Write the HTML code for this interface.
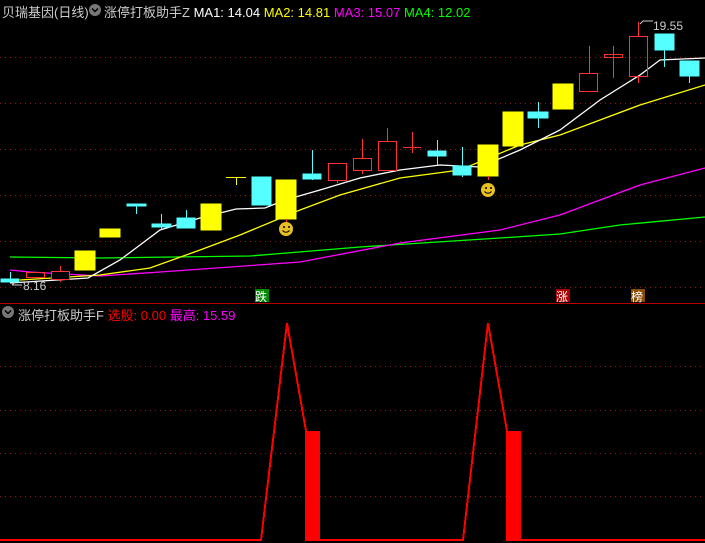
<!DOCTYPE html>
<html><head><meta charset="utf-8"><style>
body{margin:0;background:#000;width:705px;height:543px;overflow:hidden;font-family:"Liberation Sans","Noto Sans CJK SC",sans-serif}
.t{position:absolute;font-size:12px;white-space:nowrap}
</style></head><body>
<svg width="705" height="543" style="position:absolute;left:0;top:0" shape-rendering="crispEdges">
<g stroke="#8b1a1a" stroke-dasharray="1,4">
<line x1="0" y1="57.5" x2="705" y2="57.5"/><line x1="0" y1="103.5" x2="705" y2="103.5"/><line x1="0" y1="149.5" x2="705" y2="149.5"/><line x1="0" y1="195.5" x2="705" y2="195.5"/><line x1="0" y1="241.5" x2="705" y2="241.5"/><line x1="0" y1="287.5" x2="705" y2="287.5"/>
<line x1="0" y1="366.5" x2="705" y2="366.5"/><line x1="0" y1="410.5" x2="705" y2="410.5"/><line x1="0" y1="453.5" x2="705" y2="453.5"/><line x1="0" y1="496.5" x2="705" y2="496.5"/>
</g>
<line x1="0" y1="303.5" x2="705" y2="303.5" stroke="#b00000"/>
<g fill="none" stroke-width="1.3" shape-rendering="auto">
<polyline stroke="#0f0" points="10,257 100,258 250,256 360,247 500,238 560,234 620,225 705,217"/>
<polyline stroke="#f0f" points="10,270 30,272 100,276 160,272 300,262 400,243 500,230 560,215 600,200 640,185 705,168"/>
<polyline stroke="#ff0" points="20,280 100,275 150,268 200,250 240,235 300,210 340,195 400,178 460,170 520,145 560,135 600,120 640,105 705,85"/>
<polyline stroke="#fff" points="10,283 88,278 120,260 160,230 200,218 236,209 265,208 285,200 320,190 360,178 400,170 440,165 480,167 520,150 560,130 600,100 640,75 660,60 705,58"/>
</g>
<g stroke="#5ff" fill="#5ff">
<line x1="10.5" y1="272" x2="10.5" y2="282"/><rect x="1" y="279" width="18" height="3"/>
<line x1="136.5" y1="204" x2="136.5" y2="214"/><rect x="127" y="204" width="19" height="2"/>
<line x1="161.5" y1="214" x2="161.5" y2="229"/><rect x="152" y="224" width="19" height="3"/>
<line x1="186.5" y1="210" x2="186.5" y2="228"/><rect x="177" y="218" width="18" height="10"/>
<rect x="252" y="177" width="19" height="28"/>
<line x1="312.5" y1="150" x2="312.5" y2="180"/><rect x="303" y="174" width="18" height="5"/>
<line x1="437.5" y1="140" x2="437.5" y2="165"/><rect x="428" y="151" width="18" height="5"/>
<line x1="462.5" y1="147" x2="462.5" y2="177"/><rect x="453" y="166" width="18" height="9"/>
<line x1="538.5" y1="102" x2="538.5" y2="128"/><rect x="528" y="112" width="20" height="6"/>
<line x1="664.5" y1="34" x2="664.5" y2="67"/><rect x="655" y="34" width="19" height="16"/>
<line x1="689.5" y1="61" x2="689.5" y2="83"/><rect x="680" y="61" width="19" height="15"/>
</g>
<g fill="#ff0" stroke="#ff0">
<rect x="75" y="251" width="20" height="19"/><rect x="100" y="229" width="20" height="8"/>
<rect x="201" y="204" width="20" height="26"/>
<line x1="226" y1="177.5" x2="246" y2="177.5"/><line x1="236.5" y1="177" x2="236.5" y2="185"/>
<rect x="276" y="180" width="20" height="39"/>
<rect x="478" y="145" width="20" height="31"/><rect x="503" y="112" width="20" height="34"/><rect x="553" y="84" width="20" height="25"/>
</g>
<g stroke="#f33" fill="none">
<rect x="26.5" y="272.5" width="18" height="5"/>
<line x1="60.5" y1="266" x2="60.5" y2="282"/><rect x="51.5" y="271.5" width="18" height="8" fill="#000"/>
<line x1="337.5" y1="180" x2="337.5" y2="183"/><rect x="328.5" y="163.5" width="18" height="17"/>
<line x1="362.5" y1="139" x2="362.5" y2="174"/><rect x="353.5" y="158.5" width="18" height="12" fill="#000"/>
<line x1="387.5" y1="128" x2="387.5" y2="141"/><rect x="378.5" y="141.5" width="18" height="29"/>
<line x1="412.5" y1="132" x2="412.5" y2="153"/><line x1="403" y1="147.5" x2="421" y2="147.5"/>
<line x1="589.5" y1="46" x2="589.5" y2="73"/><rect x="579.5" y="73.5" width="18" height="18"/>
<line x1="613.5" y1="46" x2="613.5" y2="78"/><rect x="604.5" y="54.5" width="18" height="3"/>
<line x1="638.5" y1="22" x2="638.5" y2="36"/><line x1="638.5" y1="76" x2="638.5" y2="83"/><rect x="629.5" y="36.5" width="18" height="40"/>
<line x1="286.5" y1="219" x2="286.5" y2="222"/><line x1="488.5" y1="176" x2="488.5" y2="180"/>
</g>
<g shape-rendering="auto">
<circle cx="286" cy="229" r="7" fill="#e8c020"/><circle cx="284" cy="227" r="1" fill="#000"/><circle cx="289" cy="227" r="1" fill="#000"/><path d="M282.5 230.5q3.5 3.5 7 0" stroke="#000" fill="none"/>
<circle cx="488" cy="190" r="7" fill="#e8c020"/><circle cx="486" cy="188" r="1" fill="#000"/><circle cx="491" cy="188" r="1" fill="#000"/><path d="M484.5 191.5q3.5 3.5 7 0" stroke="#000" fill="none"/>
<circle cx="95" cy="10" r="6" fill="#777"/><path d="M92 8.5l3 3 3-3" stroke="#000" stroke-width="1.5" fill="none"/>
<circle cx="8" cy="312" r="6" fill="#777"/><path d="M5 310.5l3 3 3-3" stroke="#000" stroke-width="1.5" fill="none"/>
<path d="M12 285h10M12 285l3-3" stroke="#ccc" fill="none"/>
<path d="M640 24l3-3h10" stroke="#ccc" fill="none"/>
</g>
<polyline fill="none" stroke="#f00" stroke-width="2" points="0,540 261,540 287,323 306,431 306,540 463,540 488,323 507,431 507,540 705,540"/>
<rect x="305" y="431" width="15" height="110" fill="#f00"/>
<rect x="506" y="431" width="15" height="110" fill="#f00"/>
<rect x="255" y="289" width="14" height="13" fill="#080"/>
<rect x="556" y="289" width="14" height="13" fill="#a00"/>
<rect x="631" y="289" width="14" height="13" fill="#8a4a00"/>
</svg>
<div class="t" style="left:2px;top:2px;color:#ccc;font-size:13px">贝瑞基因(日线)</div>
<div class="t" style="left:104px;top:2px;color:#ccc;font-size:13px">涨停打板助手Z <span style="color:#fff">MA1: 14.04</span> <span style="color:#ff0">MA2: 14.81</span> <span style="color:#f0f">MA3: 15.07</span> <span style="color:#0f0">MA4: 12.02</span></div>
<div class="t" style="left:653px;top:19px;color:#ccc">19.55</div>
<div class="t" style="left:23px;top:279px;color:#ccc">8.16</div>
<div class="t" style="left:255px;top:288px;color:#fff;font-size:12px">跌</div>
<div class="t" style="left:556px;top:288px;color:#fff;font-size:12px">涨</div>
<div class="t" style="left:631px;top:288px;color:#fff;font-size:12px">榜</div>
<div class="t" style="left:18px;top:305px;color:#ccc;font-size:13px">涨停打板助手F <span style="color:#f00">选股: 0.00</span> <span style="color:#f0f">最高: 15.59</span></div>
</body></html>
